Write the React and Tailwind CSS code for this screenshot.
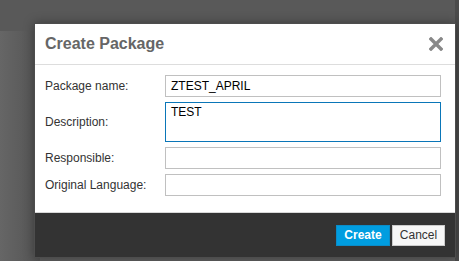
import React from "react";

export default function App() {
  return (
    <div
      className="relative w-[459px] h-[261px] overflow-hidden bg-[#5f5f5f]"
      style={{ fontFamily: '"Liberation Sans", Arial, sans-serif' }}
    >
      <div className="h-[31px] bg-[#595959]" />
      <div className="absolute left-0 top-[31px] w-[40px] h-[230px] bg-gradient-to-r from-[#666666] to-[#545454]" />
      <div className="absolute right-0 top-0 w-[4px] h-[261px] bg-[#4b4b4b]" />

      <div className="absolute left-[34px] top-[23px] w-[422px] border border-[#4d4d4d] bg-white shadow-[0_0_10px_rgba(0,0,0,0.35)] flex flex-col">
        <div className="h-[41px] flex items-center justify-between pl-[10px] pr-[12px] border-b border-[#dddddd]">
          <span className="text-[16px] font-bold text-[#666666]">Create Package</span>
          <svg width="14" height="14" viewBox="0 0 14 14">
            <path d="M2 2 L12 12 M12 2 L2 12" stroke="#888888" strokeWidth="3.4" strokeLinecap="square" />
          </svg>
        </div>

        <div className="pt-[10px] pb-[16px] pl-[10px] pr-[14px] flex flex-col gap-[5px] text-[12px]">
          <div className="flex items-center">
            <span className="w-[120px] text-[#333333]">Package name:</span>
            <div className="flex-1 h-[22px] border border-[#c0c0c0] flex items-center pl-[5px] text-black">ZTEST_APRIL</div>
          </div>
          <div className="flex items-center">
            <span className="w-[120px] text-[#333333]">Description:</span>
            <div className="flex-1 h-[40px] border border-[#0a76b8] pl-[5px] pt-[2px] text-black leading-[14px]">TEST</div>
          </div>
          <div className="flex items-center">
            <span className="w-[120px] text-[#333333]">Responsible:</span>
            <div className="flex-1 h-[22px] border border-[#c0c0c0]" />
          </div>
          <div className="flex items-center">
            <span className="w-[120px] text-[#333333]">Original Language:</span>
            <div className="flex-1 h-[22px] border border-[#c0c0c0]" />
          </div>
        </div>

        <div className="h-[45px] bg-[#333333] border-t border-[#d8d8d8] flex items-center justify-end gap-[2px] pr-[10px]">
          <button className="w-[54px] h-[21px] bg-[#009de0] border border-[#0a8cc8] text-white font-bold text-[12px] flex items-center justify-center">Create</button>
          <button className="w-[53px] h-[21px] bg-[#f7f7f7] border border-[#cccccc] text-[#333333] text-[12px] flex items-center justify-center">Cancel</button>
        </div>
      </div>
    </div>
  );
}
